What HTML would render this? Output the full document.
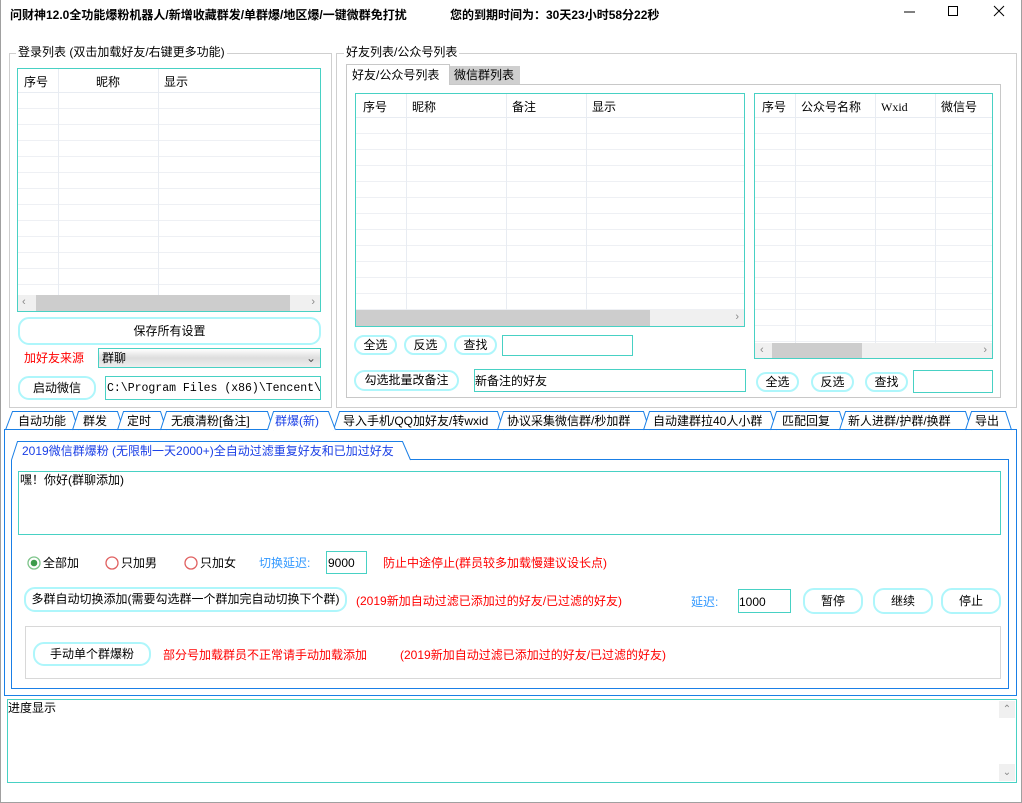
<!DOCTYPE html>
<html><head><meta charset="utf-8">
<style>
*{margin:0;padding:0;box-sizing:border-box}
body{width:1022px;height:803px;background:#fff;font-family:"Liberation Sans","Noto Sans CJK SC",sans-serif;font-size:12px;color:#000;position:relative;overflow:hidden}
.a{position:absolute;white-space:nowrap;line-height:14px}
.box{position:absolute;border:1px solid #cfcfcf}
.lv{position:absolute;border:1px solid #48d1c4;background:#fff;overflow:hidden}
.btn{position:absolute;border:2px solid #aef6fb;border-radius:11px;background:#fff;text-align:center;font-size:12px}
.inp{position:absolute;border:1px solid #48d1c4;background:#fff}
.red{color:#f00}
.blue{color:#3399ff}
.grid{position:absolute;left:0;right:0;background:repeating-linear-gradient(#fff 0 15px,#eef0f4 15px 16px)}
.vl{position:absolute;top:0;bottom:0;width:1px;background:#e8ecf2}
.sb{position:absolute;left:0;right:0;height:16px;background:#f0f0f0}
.th{position:absolute;height:16px;top:0;background:#cdcdcd}
.arr{position:absolute;top:1px;color:#888;font-size:11px}
</style></head><body>
<div style="position:absolute;left:0;top:0;width:1022px;height:803px;border:1px solid #a0a0a0;border-top:none"></div>
<div class="a" style="left:10px;top:8px;font-weight:bold">问财神12.0全功能爆粉机器人/新增收藏群发/单群爆/地区爆/一键微群免打扰</div>
<div class="a" style="left:450px;top:8px;font-weight:bold">您的到期时间为：30天23小时58分22秒</div>
<svg style="position:absolute;left:900px;top:4px" width="115" height="16"><line x1="4" y1="8" x2="15" y2="8" stroke="#000"/><rect x="48.5" y="2.5" width="9" height="9" fill="none" stroke="#000"/><path d="M94 2 L104 12 M104 2 L94 12" stroke="#000"/></svg>

<!-- left group -->
<div class="box" style="left:9px;top:53px;width:323px;height:355px"></div>
<div class="a" style="left:16px;top:45px;background:#fff;padding:0 2px">登录列表 (双击加载好友/右键更多功能)</div>
<div class="lv" style="left:17px;top:68px;width:304px;height:244px">
 <div class="grid" style="top:24px;height:202px"></div>
 <div style="position:absolute;left:0;right:0;top:0;height:24px;border-bottom:1px solid #e8ecf2;background:#fff"></div>
 <div class="vl" style="left:40px"></div><div class="vl" style="left:140px"></div>
 <div class="a" style="left:6px;top:6px">序号</div><div class="a" style="left:78px;top:6px">昵称</div><div class="a" style="left:146px;top:6px">显示</div>
 <div class="sb" style="top:226px"><div class="th" style="left:18px;width:254px"></div><span class="arr" style="left:4px">&lsaquo;</span><span class="arr" style="right:5px">&rsaquo;</span></div>
</div>
<div class="btn" style="left:18px;top:317px;width:303px;height:28px;line-height:24px">保存所有设置</div>
<div class="a red" style="left:24px;top:351px">加好友来源</div>
<div class="inp" style="left:98px;top:348px;width:223px;height:20px;background:linear-gradient(#fff,#ddd 50%,#eee)"><span class="a" style="left:3px;top:2px">群聊</span><span class="a" style="right:4px;top:2px;color:#555">&#8964;</span></div>
<div class="btn" style="left:18px;top:376px;width:78px;height:24px;line-height:20px">启动微信</div>
<div class="inp" style="left:105px;top:376px;width:216px;height:24px;overflow:hidden"><span class="a" style="left:1px;top:5px;font-family:'Liberation Mono',monospace;font-size:11.5px">C:\Program Files (x86)\Tencent\WeChat</span></div>

<!-- right group -->
<div class="box" style="left:336px;top:53px;width:681px;height:355px"></div>
<div class="a" style="left:344px;top:45px;background:#fff;padding:0 2px">好友列表/公众号列表</div>
<div class="box" style="left:346px;top:84px;width:655px;height:314px;border-color:#c8c8c8"></div>
<div style="position:absolute;left:346px;top:64px;width:104px;height:21px;border:1px solid #c8c8c8;border-bottom:none;background:#fff"></div>
<div class="a" style="left:352px;top:68px">好友/公众号列表</div>
<div style="position:absolute;left:450px;top:66px;width:70px;height:18px;background:#cfcfcf"></div>
<div class="a" style="left:454px;top:68px">微信群列表</div>

<div class="lv" style="left:355px;top:93px;width:390px;height:234px">
 <div class="grid" style="top:24px;height:192px"></div>
 <div style="position:absolute;left:0;right:0;top:0;height:24px;border-bottom:1px solid #e8ecf2;background:#fff"></div>
 <div class="vl" style="left:50px"></div><div class="vl" style="left:150px"></div><div class="vl" style="left:230px"></div>
 <div class="a" style="left:7px;top:6px">序号</div><div class="a" style="left:56px;top:6px">昵称</div><div class="a" style="left:156px;top:6px">备注</div><div class="a" style="left:236px;top:6px">显示</div>
 <div class="sb" style="top:216px"><div class="th" style="left:0;width:294px"></div><span class="arr" style="right:5px">&rsaquo;</span></div>
</div>
<div class="btn" style="left:354px;top:335px;width:43px;height:20px;line-height:16px">全选</div>
<div class="btn" style="left:404px;top:335px;width:43px;height:20px;line-height:16px">反选</div>
<div class="btn" style="left:454px;top:335px;width:43px;height:20px;line-height:16px">查找</div>
<div class="inp" style="left:502px;top:335px;width:131px;height:21px"></div>
<div class="btn" style="left:354px;top:370px;width:105px;height:21px;line-height:17px">勾选批量改备注</div>
<div class="inp" style="left:474px;top:369px;width:272px;height:23px"><span class="a" style="left:0;top:4px">新备注的好友</span></div>

<div class="lv" style="left:754px;top:93px;width:239px;height:266px">
 <div class="grid" style="top:24px;height:225px"></div>
 <div style="position:absolute;left:0;right:0;top:0;height:24px;border-bottom:1px solid #e8ecf2;background:#fff"></div>
 <div class="vl" style="left:40px"></div><div class="vl" style="left:120px"></div><div class="vl" style="left:180px"></div>
 <div class="a" style="left:7px;top:6px">序号</div><div class="a" style="left:46px;top:6px">公众号名称</div><div class="a" style="left:126px;top:6px;font-family:'Liberation Serif',serif">Wxid</div><div class="a" style="left:186px;top:6px">微信号</div>
 <div class="sb" style="top:249px"><div class="th" style="left:17px;width:90px"></div><span class="arr" style="left:5px">&lsaquo;</span><span class="arr" style="right:5px">&rsaquo;</span></div>
</div>
<div class="btn" style="left:756px;top:372px;width:43px;height:20px;line-height:16px">全选</div>
<div class="btn" style="left:811px;top:372px;width:43px;height:20px;line-height:16px">反选</div>
<div class="btn" style="left:865px;top:372px;width:43px;height:20px;line-height:16px">查找</div>
<div class="inp" style="left:913px;top:370px;width:80px;height:23px"></div>

<!-- main tabs -->
<svg style="position:absolute;left:0;top:405px" width="1022" height="30">
<g fill="#fff" stroke="#1a7fe6" stroke-width="1">
<path d="M5.5 25 L12.5 6.5 L72.5 6.5 L78.5 25"/>
<path d="M72.5 25 L78.5 6.5 L117.5 6.5 L123.5 25"/>
<path d="M117.5 25 L123.5 6.5 L160.5 6.5 L166.5 25"/>
<path d="M160.5 25 L166.5 6.5 L267.5 6.5 L273.5 25"/>
<path d="M333.5 25 L339.5 6.5 L497.5 6.5 L503.5 25"/>
<path d="M497.5 25 L503.5 6.5 L643.5 6.5 L649.5 25"/>
<path d="M643.5 25 L649.5 6.5 L770.5 6.5 L776.5 25"/>
<path d="M770.5 25 L776.5 6.5 L839.5 6.5 L845.5 25"/>
<path d="M839.5 25 L845.5 6.5 L965.5 6.5 L971.5 25"/>
<path d="M965.5 25 L971.5 6.5 L1005.5 6.5 L1011.5 25"/>
<path d="M267.5 25 L273.5 6.5 L328.5 6.5 L335.5 25"/>
</g></svg>
<div style="position:absolute;left:4px;top:430px;width:1013px;height:266px;border:1px solid #1a7fe6;border-top:none"></div>
<div style="position:absolute;left:4px;top:429px;width:264px;height:1px;background:#1a7fe6"></div>
<div style="position:absolute;left:336px;top:429px;width:681px;height:1px;background:#1a7fe6"></div>
<div class="a" style="left:18px;top:414px">自动功能</div>
<div class="a" style="left:83px;top:414px">群发</div>
<div class="a" style="left:127px;top:414px">定时</div>
<div class="a" style="left:171px;top:414px">无痕清粉[备注]</div>
<div class="a" style="left:275px;top:414px;color:#1a3fe6">群爆(新)</div>
<div class="a" style="left:343px;top:414px">导入手机/QQ加好友/转wxid</div>
<div class="a" style="left:507px;top:414px">协议采集微信群/秒加群</div>
<div class="a" style="left:653px;top:414px">自动建群拉40人小群</div>
<div class="a" style="left:782px;top:414px">匹配回复</div>
<div class="a" style="left:848px;top:414px">新人进群/护群/换群</div>
<div class="a" style="left:975px;top:414px">导出</div>

<!-- inner tab -->
<svg style="position:absolute;left:0;top:435px" width="420" height="30"><path d="M11.5 25 L17.5 6.5 L402.5 6.5 L410.5 25" fill="#fff" stroke="#1a7fe6"/></svg>
<div style="position:absolute;left:11px;top:460px;width:998px;height:229px;border:1px solid #1a7fe6;border-top:none"></div>
<div style="position:absolute;left:410px;top:459px;width:599px;height:1px;background:#1a7fe6"></div>
<div class="a" style="left:22px;top:444px;color:#1a3fe6">2019微信群爆粉 (无限制一天2000+)全自动过滤重复好友和已加过好友</div>

<div class="inp" style="left:18px;top:471px;width:983px;height:64px"><span class="a" style="left:1px;top:1px">嘿！你好(群聊添加)</span></div>

<svg style="position:absolute;left:26px;top:555px" width="200" height="16">
<circle cx="8" cy="8" r="6" fill="#fff" stroke="#7dc48a" stroke-width="1.3"/><circle cx="8" cy="8" r="3.3" fill="#3c9b4b"/>
<circle cx="86" cy="8" r="6" fill="#fff" stroke="#e06060" stroke-width="1.3"/>
<circle cx="165" cy="8" r="6" fill="#fff" stroke="#e06060" stroke-width="1.3"/></svg>
<div class="a" style="left:43px;top:556px">全部加</div>
<div class="a" style="left:121px;top:556px">只加男</div>
<div class="a" style="left:200px;top:556px">只加女</div>
<div class="a blue" style="left:259px;top:556px">切换延迟:</div>
<div class="inp" style="left:326px;top:551px;width:41px;height:23px"><span class="a" style="left:1px;top:4px">9000</span></div>
<div class="a red" style="left:383px;top:556px">防止中途停止(群员较多加载慢建议设长点)</div>

<div class="btn" style="left:24px;top:587px;width:323px;height:25px;line-height:21px">多群自动切换添加(需要勾选群一个群加完自动切换下个群)</div>
<div class="a red" style="left:356px;top:594px">(2019新加自动过滤已添加过的好友/已过滤的好友)</div>
<div class="a blue" style="left:691px;top:595px">延迟:</div>
<div class="inp" style="left:738px;top:589px;width:53px;height:24px"><span class="a" style="left:0;top:5px">1000</span></div>
<div class="btn" style="left:803px;top:588px;width:60px;height:26px;line-height:22px">暂停</div>
<div class="btn" style="left:873px;top:588px;width:60px;height:26px;line-height:22px">继续</div>
<div class="btn" style="left:941px;top:588px;width:60px;height:26px;line-height:22px">停止</div>

<div class="box" style="left:25px;top:626px;width:976px;height:53px;border-color:#d8d8d8"></div>
<div class="btn" style="left:33px;top:642px;width:118px;height:24px;line-height:20px">手动单个群爆粉</div>
<div class="a red" style="left:163px;top:648px">部分号加载群员不正常请手动加载添加</div>
<div class="a red" style="left:400px;top:648px">(2019新加自动过滤已添加过的好友/已过滤的好友)</div>

<div class="inp" style="left:7px;top:699px;width:1010px;height:84px"><span class="a" style="left:0;top:1px">进度显示</span>
<div style="position:absolute;right:1px;top:1px;width:16px;height:17px;background:#f0f0f0;color:#888;font-size:10px;text-align:center;line-height:17px">&#8963;</div>
<div style="position:absolute;right:1px;bottom:1px;width:16px;height:17px;background:#f0f0f0;color:#888;font-size:10px;text-align:center;line-height:17px">&#8964;</div></div>
</body></html>
